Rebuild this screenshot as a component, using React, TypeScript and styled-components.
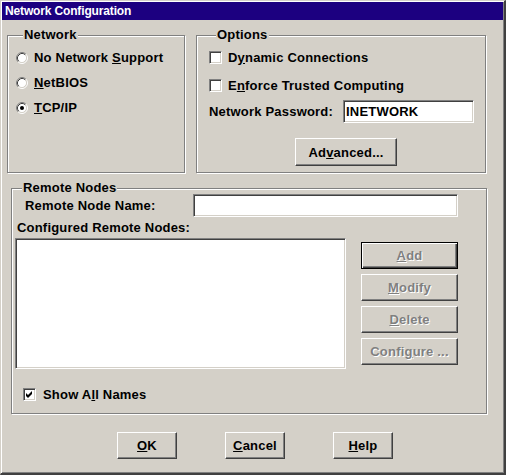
import React from "react";
import styled, { createGlobalStyle } from "styled-components";

const Global = createGlobalStyle`
  html, body { margin: 0; padding: 0; background: #d4d0c8; }
  body { font-family: "Liberation Sans", Arial, sans-serif; }
`;

const FACE = "#d4d0c8";

const Window = styled.div`
  box-sizing: border-box;
  width: 506px;
  height: 475px;
  background: ${FACE};
  border-style: solid;
  border-width: 1px 2px 2px 1px;
  border-color: ${FACE} #404040 #404040 ${FACE};
  box-shadow: inset 1px 1px 0 #fff, inset -1px -1px 0 #808080;
  padding: 1px;
  display: flex;
  flex-direction: column;
  font: bold 13px "Liberation Sans", Arial, sans-serif;
  letter-spacing: 0.2px;
  color: #000;
`;

const TitleBar = styled.div`
  height: 18px;
  flex: none;
  background: #1c0080;
  color: #fff;
  font: bold 12px "Liberation Sans", Arial, sans-serif;
  letter-spacing: -0.15px;
  display: flex;
  align-items: center;
  padding-left: 3px;
`;

const Body = styled.div`
  display: flex;
  flex-direction: column;
  padding: 8px 0 0 5px;
`;

const TopRow = styled.div`
  display: flex;
  gap: 11px;
  height: 145px;
`;

const GroupBox = styled.fieldset<{ $w: number; $h: number; $pl: number }>`
  box-sizing: border-box;
  margin: 0;
  min-width: 0;
  width: ${(p) => p.$w}px;
  height: ${(p) => p.$h}px;
  padding: 0 0 0 ${(p) => p.$pl}px;
  border: 1px solid #808080;
  box-shadow: 1px 1px 0 #fff, inset 1px 1px 0 #fff;
  display: flex;
  flex-direction: column;
`;

const RemoteBox = styled(GroupBox)`
  margin: 8px 0 0 4px;
`;

const Legend = styled.legend`
  margin-left: 7px;
  padding: 0 1px;
  line-height: 14px;
  background: ${FACE};
`;

const OptionRow = styled.label<{ $mt?: number }>`
  display: flex;
  align-items: center;
  gap: 6px;
  height: 25px;
  margin-top: ${(p) => p.$mt ?? 0}px;
  white-space: nowrap;
`;

const RadioList = styled.div`
  display: flex;
  flex-direction: column;
  padding-top: 3px;
`;

const OptionsList = styled.div`
  display: flex;
  flex-direction: column;
  padding-top: 3px;
`;

const CheckBox = styled.span`
  box-sizing: border-box;
  flex: none;
  width: 13px;
  height: 13px;
  background: #fff;
  border: 1px solid;
  border-color: #808080 #fff #fff #808080;
  box-shadow: inset 1px 1px 0 #404040, inset -1px -1px 0 ${FACE};
  display: flex;
  align-items: center;
  justify-content: center;
`;

const FieldRow = styled.div`
  display: flex;
  align-items: center;
  margin-top: 2px;
`;

const FieldLabel = styled.span<{ $w: number; $ml?: number; $pt?: number }>`
  width: ${(p) => p.$w}px;
  margin-left: ${(p) => p.$ml ?? 0}px;
  padding-top: ${(p) => p.$pt ?? 0}px;
  flex: none;
  white-space: nowrap;
`;

const TextField = styled.div<{ $w: number }>`
  box-sizing: border-box;
  width: ${(p) => p.$w}px;
  height: 23px;
  background: #fff;
  border: 1px solid;
  border-color: #808080 #fff #fff #808080;
  box-shadow: inset 1px 1px 0 #404040, inset -1px -1px 0 ${FACE};
  padding: 0 0 0 2px;
  display: flex;
  align-items: center;
  font: bold 13px "Liberation Sans", Arial, sans-serif;
  letter-spacing: 0.2px;
`;

const Button = styled.button<{ $w: number; $h: number; $default?: boolean; $ml?: number; $mt?: number }>`
  box-sizing: border-box;
  width: ${(p) => p.$w}px;
  height: ${(p) => p.$h}px;
  margin: ${(p) => p.$mt ?? 0}px 0 0 ${(p) => p.$ml ?? 0}px;
  padding: 0;
  flex: none;
  background: ${FACE};
  font: bold 13px "Liberation Sans", Arial, sans-serif;
  letter-spacing: 0.2px;
  color: #000;
  border: 1px solid;
  border-color: ${(p) => (p.$default ? "#000" : "#fff #404040 #404040 #fff")};
  box-shadow: ${(p) =>
    p.$default
      ? "inset 1px 1px 0 #fff, inset -1px -1px 0 #404040, inset -2px -2px 0 #808080"
      : "inset -1px -1px 0 #808080"};
  display: flex;
  align-items: center;
  justify-content: center;
  &:disabled {
    color: #808080;
    text-shadow: 1px 1px 0 #fff;
  }
`;

const NameRow = styled.div`
  display: flex;
  align-items: flex-start;
  margin-top: -1px;
`;

const CaptionRow = styled.div`
  height: 21px;
  display: flex;
  align-items: center;
  padding-left: 2px;
`;

const ListRow = styled.div`
  display: flex;
  gap: 15px;
`;

const ListBox = styled.div`
  box-sizing: border-box;
  width: 331px;
  height: 131px;
  background: #fff;
  border: 1px solid;
  border-color: #808080 #fff #fff #808080;
  box-shadow: inset 1px 1px 0 #404040, inset -1px -1px 0 ${FACE};
`;

const ButtonColumn = styled.div`
  display: flex;
  flex-direction: column;
  gap: 5px;
  padding-top: 4px;
`;

const ShowRow = styled(OptionRow)`
  margin: 13px 0 0 8px;
  gap: 7px;
`;

const ButtonRow = styled.div`
  display: flex;
  justify-content: center;
  gap: 48px;
  margin-top: 18px;
`;

const Radio: React.FC<{ checked?: boolean }> = ({ checked }) => (
  <svg width="12" height="12" viewBox="0 0 12 12" style={{ flex: "none" }}>
    <path d="M2.11 9.89 A5.5 5.5 0 0 1 9.89 2.11" fill="none" stroke="#808080" strokeWidth="1" />
    <path d="M9.89 2.11 A5.5 5.5 0 0 1 2.11 9.89" fill="none" stroke="#fff" strokeWidth="1" />
    <circle cx="6" cy="6" r="4.5" fill="#fff" />
    <path d="M2.82 9.18 A4.5 4.5 0 0 1 9.18 2.82" fill="none" stroke="#404040" strokeWidth="1" />
    <path d="M9.18 2.82 A4.5 4.5 0 0 1 2.82 9.18" fill="none" stroke={FACE} strokeWidth="1" />
    {checked && <circle cx="6" cy="6" r="2" fill="#000" />}
  </svg>
);

const Check: React.FC<{ checked?: boolean }> = ({ checked }) => (
  <CheckBox>
    {checked && (
      <svg width="7" height="7" viewBox="0 0 7 7">
        <path d="M0 2 L2 4 L6 0 L6 3 L2 7 L0 5 Z" fill="#000" />
      </svg>
    )}
  </CheckBox>
);

export default function App() {
  return (
    <>
      <Global />
      <Window>
        <TitleBar>Network Configuration</TitleBar>
        <Body>
          <TopRow>
            <GroupBox $w={178} $h={145} $pl={8}>
              <Legend>Network</Legend>
              <RadioList>
                <OptionRow>
                  <Radio />
                  <span>No Network <u>S</u>upport</span>
                </OptionRow>
                <OptionRow>
                  <Radio />
                  <span><u>N</u>etBIOS</span>
                </OptionRow>
                <OptionRow>
                  <Radio checked />
                  <span><u>T</u>CP/IP</span>
                </OptionRow>
              </RadioList>
            </GroupBox>
            <GroupBox $w={290} $h={145} $pl={12}>
              <Legend>Options</Legend>
              <OptionsList>
                <OptionRow>
                  <Check />
                  <span>D<u>y</u>namic Connections</span>
                </OptionRow>
                <OptionRow $mt={3}>
                  <Check />
                  <span>E<u>n</u>force Trusted Computing</span>
                </OptionRow>
                <FieldRow>
                  <FieldLabel $w={134}>Network Password:</FieldLabel>
                  <TextField $w={131}>INETWORK</TextField>
                </FieldRow>
                <Button $w={102} $h={28} $ml={86} $mt={15}>
                  <span>Ad<u>v</u>anced...</span>
                </Button>
              </OptionsList>
            </GroupBox>
          </TopRow>
          <RemoteBox $w={476} $h={233} $pl={3}>
            <Legend>Remote Nodes</Legend>
            <NameRow>
              <FieldLabel $w={168} $ml={10} $pt={4}>Remote Node Name:</FieldLabel>
              <TextField $w={265} />
            </NameRow>
            <CaptionRow>Configured Remote Nodes:</CaptionRow>
            <ListRow>
              <ListBox />
              <ButtonColumn>
                <Button $w={97} $h={27} $default disabled>
                  <span><u>A</u>dd</span>
                </Button>
                <Button $w={97} $h={27} disabled>
                  <span><u>M</u>odify</span>
                </Button>
                <Button $w={97} $h={27} disabled>
                  <span><u>D</u>elete</span>
                </Button>
                <Button $w={97} $h={27} disabled>
                  <span>Confi<u>g</u>ure ...</span>
                </Button>
              </ButtonColumn>
            </ListRow>
            <ShowRow>
              <Check checked />
              <span>Show A<u>l</u>l Names</span>
            </ShowRow>
          </RemoteBox>
          <ButtonRow>
            <Button $w={60} $h={27}>
              <span><u>O</u>K</span>
            </Button>
            <Button $w={60} $h={27}>
              <span><u>C</u>ancel</span>
            </Button>
            <Button $w={60} $h={27}>
              <span><u>H</u>elp</span>
            </Button>
          </ButtonRow>
        </Body>
      </Window>
    </>
  );
}
